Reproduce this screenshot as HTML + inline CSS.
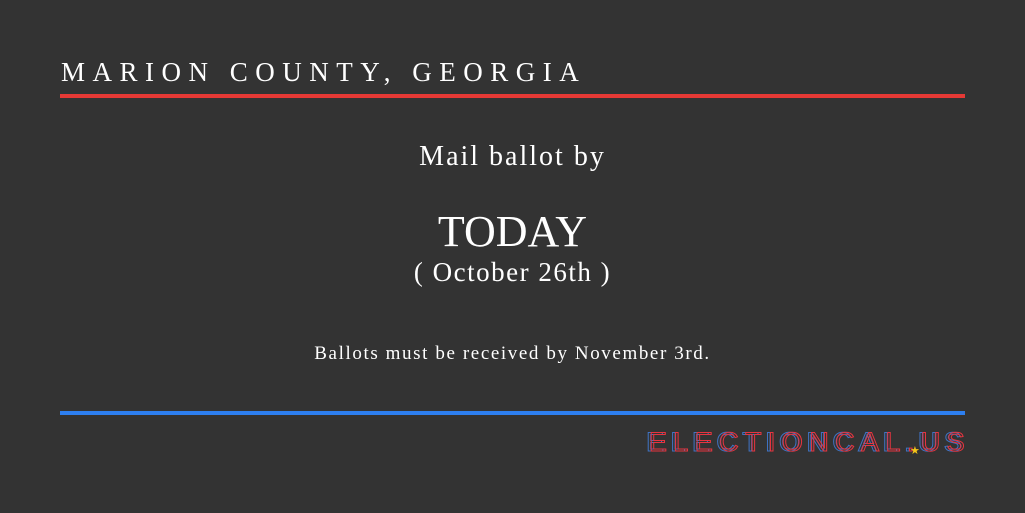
<!DOCTYPE html>
<html><head><style>
html,body{margin:0;padding:0;}
body{width:1025px;height:513px;background:#333333;position:relative;overflow:hidden;font-family:"Liberation Serif","DejaVu Serif",serif;color:#fff;}
.t{position:absolute;left:61px;top:57px;font-size:27px;letter-spacing:7.5px;white-space:nowrap;}
.l{position:absolute;left:60px;width:905px;height:4px;}
.c{position:absolute;left:0;width:1025px;text-align:center;white-space:nowrap;}
.logo{position:absolute;left:648px;top:427px;font-family:"Liberation Sans","DejaVu Sans",sans-serif;font-size:27px;letter-spacing:6.4px;white-space:nowrap;color:transparent;}
.logo span{position:absolute;left:0;top:0;}
</style></head><body>
<div class="t">MARION COUNTY, GEORGIA</div>
<div class="l" style="top:94px;background:#e53935;"></div>
<div class="c" style="top:141px;font-size:28px;letter-spacing:2px;">Mail ballot by</div>
<div class="c" style="top:206px;font-size:44px;">TODAY</div>
<div class="c" style="top:257px;font-size:27px;letter-spacing:1.5px;">( October 26th )</div>
<div class="c" style="top:343px;font-size:19px;letter-spacing:1.6px;">Ballots must be received by November 3rd.</div>
<div class="l" style="top:411px;background:#2d7ff0;"></div>
<div class="logo">
<span style="-webkit-text-stroke:1px #3f73c4;left:-2px;">ELECTIONCAL.US</span>
<span style="-webkit-text-stroke:1px #e8343f;left:1px;">ELECTIONCAL.US</span>
</div>
<div style="position:absolute;left:910px;top:444px;color:#f5c518;font-size:11px;">★</div>
</body></html>
